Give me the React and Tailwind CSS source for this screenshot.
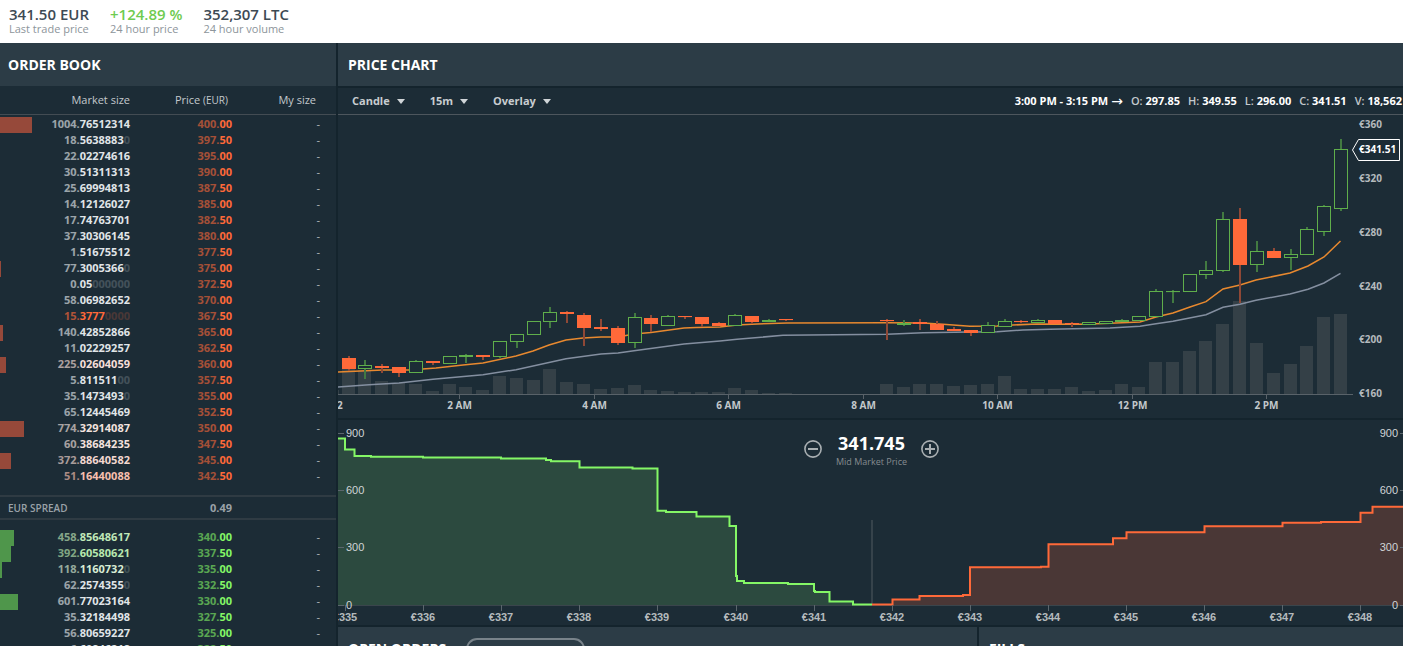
import { useState } from 'react';

const ASKS = [
  ['1004.76512314', '400.00'],
  ['18.56388830', '397.50'],
  ['22.02274616', '395.00'],
  ['30.51311313', '390.00'],
  ['25.69994813', '387.50'],
  ['14.12126027', '385.00'],
  ['17.74763701', '382.50'],
  ['37.30306145', '380.00'],
  ['1.51675512', '377.50'],
  ['77.30053660', '375.00'],
  ['0.05000000', '372.50'],
  ['58.06982652', '370.00'],
  ['15.37770000', '367.50', 'text-[#ff6939]'],
  ['140.42852866', '365.00'],
  ['11.02229257', '362.50'],
  ['225.02604059', '360.00', 'text-[#f6dfd9]'],
  ['5.81151100', '357.50'],
  ['35.14734930', '355.00'],
  ['65.12445469', '352.50'],
  ['774.32914087', '350.00', 'text-[#f3e2de]'],
  ['60.38684235', '347.50', 'text-[#f3e2de]'],
  ['372.88640582', '345.00', 'text-[#f4d8d0]'],
  ['51.16440088', '342.50', 'text-[#f7bfae]'],
];

const BIDS = [
  ['458.85648617', '340.00', 'text-[#c0e8b8]'],
  ['392.60580621', '337.50', 'text-[#b8e8ae]'],
  ['118.11607320', '335.00', 'text-[#d8ecd4]'],
  ['62.25743550', '332.50'],
  ['601.77023164', '330.00'],
  ['35.32184498', '327.50'],
  ['56.80659227', '325.00'],
  ['6.60846218', '322.50'],
];

const TICKER = [
  { value: '341.50 EUR', label: 'Last trade price', color: 'text-[#3d4a54]' },
  { value: '+124.89 %', label: '24 hour price', color: 'text-[#6ecb50]' },
  { value: '352,307 LTC', label: '24 hour volume', color: 'text-[#3d4a54]' },
];

const OHLC = [
  ['O:', '297.85'],
  ['H:', '349.55'],
  ['L:', '296.00'],
  ['C:', '341.51'],
  ['V:', '18,562'],
];

// slot, direction, body top, body bottom, wick top, wick bottom, volume top
const CANDLES = [
  [0, 'down', 358, 369, 356, 371, 369],
  [1, 'up', 365, 368, 360, 379, 370],
  [2, 'down', 366, 368, 364, 373, 381],
  [3, 'down', 367, 373, 367, 377, 383],
  [4, 'up', 361, 372, 360, 372, 384],
  [5, 'down', 361, 363, 361, 365, 391],
  [6, 'up', 356, 363, 356, 363, 384],
  [7, 'up', 355, 356, 354, 363, 387],
  [8, 'down', 355, 357, 355, 360, 390],
  [9, 'up', 341, 356, 341, 358, 376],
  [10, 'up', 334, 341, 334, 348, 378],
  [11, 'up', 321, 334, 321, 334, 380],
  [12, 'up', 312, 321, 307, 328, 369],
  [13, 'down', 312, 314, 311, 323, 382],
  [14, 'down', 315, 328, 313, 346, 384],
  [15, 'down', 327, 329, 319, 331, 389],
  [16, 'down', 328, 343, 326, 345, 388],
  [17, 'up', 317, 342, 313, 348, 385],
  [18, 'down', 318, 324, 315, 332, 390],
  [19, 'up', 316, 325, 315, 325, 391],
  [20, 'down', 316, 317, 316, 319, 392],
  [21, 'down', 317, 324, 317, 327, 392],
  [22, 'down', 323, 326, 322, 326, 392],
  [23, 'up', 315, 325, 314, 325, 388],
  [24, 'down', 316, 322, 316, 324, 390],
  [25, 'up', 320, 321, 319, 321, 393],
  [26, 'down', 319, 320, 319, 321, 393],
  [32, 'down', 320, 321, 319, 340, 384],
  [33, 'up', 323, 324, 320, 326, 387],
  [34, 'down', 322, 324, 319, 330, 384],
  [35, 'down', 324, 330, 321, 330, 384],
  [36, 'down', 329, 331, 327, 331, 386],
  [37, 'down', 330, 333, 330, 336, 385],
  [38, 'up', 325, 332, 322, 332, 384],
  [39, 'up', 321, 326, 319, 326, 376],
  [40, 'down', 321, 322, 320, 323, 389],
  [41, 'up', 320, 322, 319, 323, 389],
  [42, 'down', 320, 324, 320, 324, 389],
  [43, 'down', 323, 324, 322, 327, 387],
  [44, 'up', 322, 324, 322, 324, 391],
  [45, 'up', 321, 323, 321, 323, 390],
  [46, 'up', 320, 321, 319, 321, 384],
  [47, 'up', 316, 320, 316, 320, 387],
  [48, 'up', 291, 316, 289, 316, 362],
  [49, 'up', 291, 291, 290, 303, 362],
  [50, 'up', 274, 291, 274, 291, 351],
  [51, 'up', 270, 274, 261, 279, 341],
  [52, 'up', 219, 270, 212, 272, 324],
  [53, 'down', 219, 265, 208, 303, 301],
  [54, 'up', 251, 264, 241, 272, 343],
  [55, 'down', 251, 258, 248, 258, 373],
  [56, 'up', 254, 257, 249, 270, 364],
  [57, 'up', 229, 254, 227, 254, 346],
  [58, 'up', 206, 231, 205, 236, 317],
  [59, 'up', 149, 208, 139, 211, 314],
];

const FAST_AVERAGE =
  '331,372 338,372 383,370 409,370 436,368 463,365 483,363 516,356 533,351 549,345 566,340 583,338 601,337 618,337 634,334 651,332.5 684,328 696,327.5 720,327 737,325 757,324 787,323 887,322.7 923,323 943,324.3 970,326.3 997,326 1013,325 1037,324 1083,324.3 1110,323.3 1140,322 1156,317 1173,313 1190,307 1206,301.7 1223,289 1240,285 1256,280 1290,273 1308,266 1324,257 1340.5,241';
const SLOW_AVERAGE =
  '331,388 338,387 369,384.7 399,383 433,379.3 483,374.7 516,369.7 566,358.7 601,354 618,353 634,350.7 684,344 720,341 737,339.3 783,335.3 887,334.3 923,332.7 970,332 997,331.7 1023,330 1050,329.3 1110,328 1140,326.3 1156,323.7 1173,321.3 1206,314.7 1223,307.3 1240,304.3 1256,300.3 1290,294 1308,289.3 1324,283 1340.5,273.3';

const PRICE_TICKS = [
  ['€360', 124],
  ['€320', 178],
  ['€280', 232],
  ['€240', 286],
  ['€200', 339],
  ['€160', 393],
];

const TIME_TICKS = [
  ['2 AM', 459.5],
  ['4 AM', 594.5],
  ['6 AM', 728.5],
  ['8 AM', 863.5],
  ['10 AM', 997.5],
  ['12 PM', 1132.5],
  ['2 PM', 1266.5],
];

const BID_DEPTH =
  'M338 438.5H345V449.5H354.5V456H371V456.7H423V457.5H501V458.5H546V460H551V461.3H579.5V467.5H632.5V468.5H657.5V510.7H666V512H696.5V516.5H729.5V526H736V576H737V581H744V583H788V584H814V591H815V592H829.5V601.5H853V604.5H872';
const ASK_DEPTH =
  'M872 604.5H892.5V599.5H919.5V596H963V595H970V567.3H1041V566.7H1048.5V544.3H1113V538.3H1126.5V532.3H1204.5V526.3H1282.5V522.7H1321V522H1360.5V512.7H1372.5V506.7H1403';

const DEPTH_TICKS = [
  [900, 433],
  [600, 490],
  [300, 547],
  [0, 605],
];

// Splits an amount into whole part, significant decimals and trailing zeros
function splitAmount(amount) {
  const [whole, decimals] = amount.split('.');
  const significant = decimals.replace(/0+$/, '');
  return {
    whole: `${whole}.`,
    significant,
    zeros: decimals.slice(significant.length),
  };
}

function candleX(slot) {
  return Math.round(348.6 + slot * 16.82);
}

function OrderRow({ order, side }) {
  const [size, price, tint = 'text-[#e0e5e8]'] = order;
  const { whole, significant, zeros } = splitAmount(size);
  const [euros, cents] = price.split('.');
  const barWidth = Math.max(0, Math.floor((parseFloat(size) - 38) / 30));
  const isBid = side === 'bid';

  return (
    <tr className="h-4">
      <td className="p-0">
        <div
          className={isBid ? 'h-4 bg-[#4f964b]' : 'h-4 bg-[#96493a]'}
          style={{ width: barWidth }}
        />
      </td>
      <td className={`p-0 pb-0.5 text-right font-bold ${tint}`}>
        <span className="opacity-65">{whole}</span>
        {significant}
        <span className="opacity-20">{zeros}</span>
      </td>
      <td className={`p-0 pb-0.5 text-right font-bold ${isBid ? 'text-[#84f766]' : 'text-[#ff6939]'}`}>
        <span className="opacity-60">{euros}.</span>
        {cents}
      </td>
      <td className="p-0 pb-0.5 text-right text-[#b4babe]">-</td>
      <td className="p-0" />
    </tr>
  );
}

function BookColumns() {
  return (
    <colgroup>
      <col className="w-10" />
      <col className="w-[90px]" />
      <col className="w-[102px]" />
      <col className="w-[88px]" />
      <col />
    </colgroup>
  );
}

function PanelHeader({ title, children }) {
  return (
    <div className="flex h-[43px] shrink-0 items-center gap-5 bg-[#2c3c46] pl-2.5">
      <h2 className="text-[14px] font-bold text-white">{title}</h2>
      {children}
    </div>
  );
}

function OrderBook() {
  return (
    <section className="w-[336px] shrink-0 overflow-hidden bg-[#1c2c36]">
      <div className="flex h-[43px] items-center bg-[#2c3c46] pl-2">
        <h2 className="text-[14px] font-bold text-white">ORDER BOOK</h2>
      </div>

      <table className="w-full table-fixed border-separate border-spacing-0 text-[11px] leading-[14px]">
        <BookColumns />
        <thead>
          <tr className="h-[29px] text-[#c3c9cd]">
            <th className="border-b border-[#434c53] p-0" />
            <th className="border-b border-[#434c53] p-0 text-right font-normal">Market size</th>
            <th className="border-b border-[#434c53] p-0 pr-1 text-right font-normal">
              Price <span className="text-[10px]">(EUR)</span>
            </th>
            <th className="border-b border-[#434c53] p-0 pr-1 text-right font-normal">My size</th>
            <th className="border-b border-[#434c53] p-0" />
          </tr>
        </thead>
        <tbody className="before:block before:h-0.5 before:content-['']">
          {ASKS.map((order) => (
            <OrderRow key={order[1]} order={order} side="ask" />
          ))}
        </tbody>
      </table>

      <div className="my-2.5 flex h-[25px] items-center border-y-2 border-[#2f3b43] pt-px pl-2 text-[#9aa2a8]">
        <span className="w-28 text-[10px] font-semibold">EUR SPREAD</span>
        <span className="w-28 text-right text-[11px] font-bold">0.49</span>
      </div>

      <table className="w-full table-fixed border-separate border-spacing-0 text-[11px] leading-[14px]">
        <BookColumns />
        <tbody>
          {BIDS.map((order) => (
            <OrderRow key={order[1]} order={order} side="bid" />
          ))}
        </tbody>
      </table>
    </section>
  );
}

function ToolbarSelect({ label, options }) {
  const [value, setValue] = useState(options[0]);

  return (
    <div className="flex items-center gap-[7px]">
      <select
        aria-label={label}
        value={value}
        onChange={(e) => setValue(e.target.value)}
        className="[field-sizing:content] appearance-none bg-transparent font-bold text-[#c8cdd0] outline-none">
        {options.map((option) => (
          <option key={option}>{option}</option>
        ))}
      </select>
      <svg className="h-[5px] w-2 fill-[#d0d5d8]" viewBox="0 0 8 5">
        <path d="M0 0H8L4 5Z" />
      </svg>
    </div>
  );
}

function Candle({ candle }) {
  const [slot, direction, top, bottom, wickTop, wickBottom] = candle;
  const x = candleX(slot);
  const isUp = direction === 'up';

  return (
    <g className={isUp ? 'fill-[#1c2c36] stroke-[#5fae4b]' : 'fill-[#ff6939] stroke-[#ff6939]'}>
      <path
        d={`M${x} ${wickTop}V${top}M${x} ${bottom}V${wickBottom}`}
        className={isUp ? 'stroke-[#427a41]' : 'stroke-[#8f4836]'}
        strokeWidth="2"
      />
      <rect x={x - 6.5} y={top + 0.5} width="13" height={Math.max(0.1, bottom - top - (isUp ? 0 : 1))} />
    </g>
  );
}

function PriceChart() {
  return (
    <svg className="block h-auto w-full text-[10px]" viewBox="338 115 1065 303">
      {/* Volume */}
      <g className="fill-[#344047]">
        <rect x="338" y="390" width="1" height="4" />
        {CANDLES.map(([slot, , , , , , volumeTop]) => (
          <rect key={slot} x={candleX(slot) - 7} y={volumeTop} width="13" height={394 - volumeTop} />
        ))}
      </g>

      {/* Moving averages */}
      <polyline points={SLOW_AVERAGE} className="fill-none stroke-[#848fa0]" strokeWidth="1.5" />
      <polyline points={FAST_AVERAGE} className="fill-none stroke-[#e8892f]" strokeWidth="1.5" />

      {CANDLES.map((candle) => (
        <Candle key={candle[0]} candle={candle} />
      ))}

      {/* Time axis */}
      <path d="M338 394.5H1353" className="stroke-[#596269]" />
      <g className="fill-[#c3c8cb] font-bold" textAnchor="middle">
        <text x="337" y="409">12</text>
        {TIME_TICKS.map(([label, x]) => (
          <g key={label}>
            <path d={`M${x} 394V399`} className="stroke-[#596269]" />
            <text x={x} y="409">{label}</text>
          </g>
        ))}
      </g>

      {/* Price axis */}
      <g className="fill-[#b4babd] font-bold">
        {PRICE_TICKS.map(([label, y]) => (
          <text key={label} x="1359" y={y + 4}>{label}</text>
        ))}
      </g>
      <path
        d="M1352.5 150L1358.5 139.5H1399.5V160.5H1358.5Z"
        className="fill-[#1c2c36] stroke-white"
      />
      <text x="1359" y="153" className="fill-white font-bold">€341.51</text>
    </svg>
  );
}

function DepthChart() {
  return (
    <svg
      className="block h-auto w-full font-['Liberation_Sans',sans-serif] text-[11px]"
      viewBox="338 420 1065 205">
      <path d="M872 520V605" className="stroke-[#36434b]" strokeWidth="2" />

      <path d={`${BID_DEPTH}V605H338Z`} className="fill-[#2c4a3f]" />
      <path d={`${ASK_DEPTH}V605H872Z`} className="fill-[#4a3736]" />
      <path d="M338 605.5H1403" className="stroke-[#3a454c]" />
      <path d={BID_DEPTH} className="fill-none stroke-[#84f766]" strokeWidth="2" />
      <path d={ASK_DEPTH} className="fill-none stroke-[#ff6939]" strokeWidth="2" />

      {/* Depth axes on both sides */}
      <g className="fill-[#d0d4d6]">
        {DEPTH_TICKS.map(([label, y]) => (
          <g key={label}>
            <path d={`M338 ${y + 0.5}H344M1400 ${y + 0.5}H1403`} className="stroke-[#5b666d]" />
            <text x="346" y={y + 4}>{label}</text>
            <text x="1398" y={y + 4} textAnchor="end">{label}</text>
          </g>
        ))}
      </g>

      {/* Price axis */}
      <g className="fill-[#b4babd] font-bold" textAnchor="middle">
        {Array.from({ length: 14 }, (_, i) => {
          const x = Math.round(345 + i * 78.1) + 0.5;
          return (
            <g key={i}>
              <path d={`M${x} 605V611`} className="stroke-[#5b666d]" />
              <text x={x - 0.5} y="621">€{335 + i}</text>
            </g>
          );
        })}
      </g>
    </svg>
  );
}

function ZoomButton({ label, path }) {
  return (
    <button aria-label={label}>
      <svg className="block size-[18px] fill-none stroke-[#a9afb2]" viewBox="0 0 18 18" strokeWidth="1.6">
        <circle cx="9" cy="9" r="8.1" />
        <path d={path} strokeWidth="2" />
      </svg>
    </button>
  );
}

function App() {
  return (
    <div className="flex h-screen flex-col overflow-hidden bg-[#14242d] font-['Open_Sans',sans-serif]">
      <header className="flex h-[43px] shrink-0 gap-[21px] bg-white pt-1.5 pl-[9px]">
        {TICKER.map((item) => (
          <div key={item.label}>
            <p className={`text-[15px] leading-[17px] font-semibold ${item.color}`}>{item.value}</p>
            <p className="text-[11px] leading-3 text-[#8d959b]">{item.label}</p>
          </div>
        ))}
      </header>

      <main className="flex min-h-0 flex-1 gap-0.5">
        <OrderBook />

        <div className="flex min-w-0 flex-1 flex-col gap-0.5">
          <PanelHeader title="PRICE CHART" />

          <section className="shrink-0 bg-[#1c2c36]">
            <div className="flex h-[27px] items-center gap-[25px] overflow-hidden border-b border-[#4d565d] pl-3.5 text-[11px] whitespace-nowrap">
              <ToolbarSelect label="Chart type" options={['Candle', 'Line']} />
              <ToolbarSelect label="Interval" options={['15m', '1m', '5m', '1h', '6h', '1d']} />
              <ToolbarSelect label="Overlay" options={['Overlay', 'EMA', 'SMA']} />
              <div className="ml-auto flex items-center gap-2 pr-px font-bold text-white">
                <span className="flex items-center gap-[3px]">
                  3:00 PM - 3:15 PM
                  <span className="font-['DejaVu_Sans',sans-serif] text-[14px] leading-4 font-normal">→</span>
                </span>
                {OHLC.map(([name, value]) => (
                  <span key={name}>
                    <span className="font-semibold text-[#c3c9cd]">{name}</span> {value}
                  </span>
                ))}
              </div>
            </div>
            <PriceChart />
          </section>

          <section className="relative shrink-0 bg-[#1c2c36]">
            <DepthChart />
            <div className="absolute inset-x-0 top-2.5 flex items-center justify-center gap-3.5 pl-0.5">
              <ZoomButton label="Zoom out" path="M4 9H14" />
              <div className="text-center">
                <p className="text-[18px] leading-[26px] font-bold text-white">341.745</p>
                <p className="text-[9px] leading-3 text-[#858b8f]">Mid Market Price</p>
              </div>
              <ZoomButton label="Zoom in" path="M4 9H14M9 4V14" />
            </div>
          </section>

          <div className="flex shrink-0 gap-0.5">
            <section className="w-3/5">
              <PanelHeader title="OPEN ORDERS">
                <button className="h-[22px] rounded-full border-2 border-[#79838a] px-[7px] text-[9px] font-bold text-[#d0d5d8]">
                  CANCEL OPEN ORDERS
                </button>
              </PanelHeader>
            </section>
            <section className="flex-1">
              <PanelHeader title="FILLS" />
            </section>
          </div>
        </div>
      </main>
    </div>
  );
}

export default App;
